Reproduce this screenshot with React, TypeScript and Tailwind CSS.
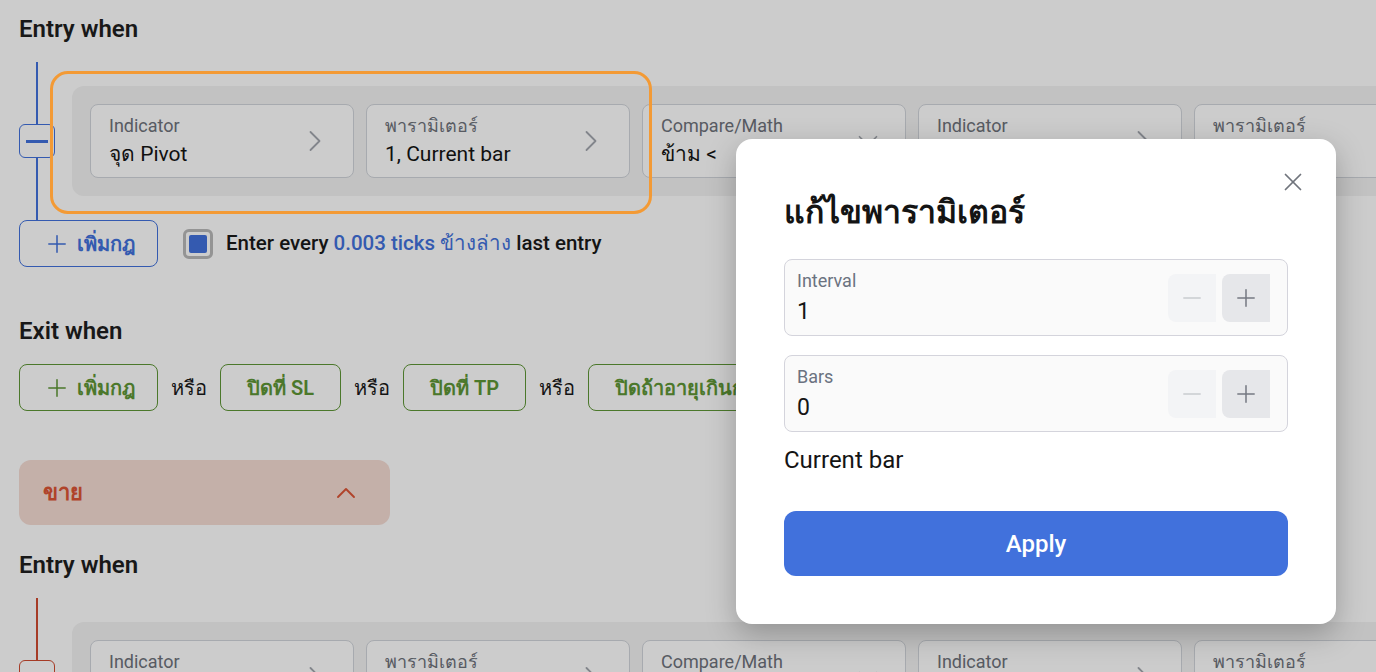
import { ChevronDown, ChevronRight, ChevronUp, Minus, Plus, X } from "lucide-react";

const BLUE = "#4171dc";

function ParamCard({
  label,
  value,
  down,
}: {
  label: string;
  value?: string;
  down?: boolean;
}) {
  return (
    <div className="flex h-[74px] w-[264px] shrink-0 items-center justify-between rounded-lg border border-[#d1d5db] bg-white pl-[18px] pr-[20px]">
      <div className="flex flex-col">
        <span className="text-[18px] leading-[22px] text-[#6e727b]">{label}</span>
        <span className="mt-[4px] h-[26px] text-[21px] leading-[26px] text-[#141414]">
          {value}
        </span>
      </div>
      {down ? (
        <ChevronDown size={34} strokeWidth={1.2} className="text-[#a3a7ae]" />
      ) : (
        <ChevronRight size={36} strokeWidth={1.2} className="text-[#a3a7ae]" />
      )}
    </div>
  );
}

function RuleRow({
  color,
  values,
}: {
  color: string;
  values: (string | undefined)[];
}) {
  const labels = ["Indicator", "พารามิเตอร์", "Compare/Math", "Indicator", "พารามิเตอร์"];
  return (
    <div className="flex">
      <div className="flex w-[36px] shrink-0 flex-col items-center">
        <div className="w-[2px] flex-1" style={{ backgroundColor: color }} />
        <div
          className="flex h-[34px] w-[36px] items-center justify-center rounded-md border bg-white"
          style={{ borderColor: color }}
        >
          <div className="h-[3px] w-[22px]" style={{ backgroundColor: color }} />
        </div>
        <div className="w-[2px] flex-1" style={{ backgroundColor: color }} />
      </div>
      <div className="ml-[17px] flex-1 py-6">
        <div className="flex gap-3 rounded-l-xl bg-[#f3f3f3] p-[18px]">
          {labels.map((l, i) => (
            <ParamCard key={i} label={l} value={values[i]} down={i === 2} />
          ))}
        </div>
      </div>
    </div>
  );
}

function GreenButton({ children }: { children: React.ReactNode }) {
  return (
    <div className="flex h-[47px] shrink-0 items-center rounded-lg border border-[#5e9636] px-[26px] text-[20px] font-semibold text-[#5e9636]">
      {children}
    </div>
  );
}

function Stepper({ label, value }: { label: string; value: string }) {
  return (
    <div className="flex h-[77px] items-center justify-between rounded-lg border border-[#d4d4dc] bg-[#fafafa] pl-[12px] pr-[17px]">
      <div className="flex flex-col">
        <span className="text-[18px] leading-[22px] text-[#6b7280]">{label}</span>
        <span className="mt-[6px] text-[23px] leading-[28px] text-[#151515]">{value}</span>
      </div>
      <div className="flex gap-[6px]">
        <div className="flex h-[48px] w-[48px] items-center justify-center rounded-l-lg bg-[#f3f4f6]">
          <Minus size={28} strokeWidth={1.3} className="text-[#c9cbd0]" />
        </div>
        <div className="flex h-[48px] w-[48px] items-center justify-center rounded-l-lg bg-[#e6e7ea]">
          <Plus size={28} strokeWidth={1.3} className="text-[#767a83]" />
        </div>
      </div>
    </div>
  );
}

export default function App() {
  return (
    <div className="relative h-[672px] w-[1376px] overflow-hidden bg-white font-[Roboto,'Noto_Sans',sans-serif]">
      <div className="pl-[19px] pt-[14px]">
        <h2 className="h-[30px] text-[24px] font-semibold leading-[30px] text-[#1f1f1f]">
          Entry when
        </h2>
        <div className="mt-[18px]">
          <RuleRow color={BLUE} values={["จุด Pivot", "1, Current bar", "ข้าม <", "", ""]} />
        </div>
        <div className="flex items-center">
          <div
            className="flex h-[47px] w-[139px] shrink-0 items-center justify-center gap-[6px] rounded-lg border text-[20px] font-semibold"
            style={{ borderColor: BLUE, color: BLUE }}
          >
            <Plus size={28} strokeWidth={1.3} />
            เพิ่มกฎ
          </div>
          <div className="ml-[25px] h-[30px] w-[30px] rounded-[6px] border-[3px] border-[#b9b9b9] bg-white p-[3px]">
            <div className="h-full w-full rounded-[2px] bg-[#4171dc]" />
          </div>
          <span className="ml-[13px] text-[20.5px] font-medium text-[#1a1a1a]">
            Enter every <span className="text-[#4171dc]">0.003 ticks ข้างล่าง</span> last entry
          </span>
        </div>

        <h2 className="mt-[49px] h-[30px] text-[24px] font-semibold leading-[30px] text-[#1f1f1f]">
          Exit when
        </h2>
        <div className="mt-[18px] flex items-center gap-[13px] text-[20px] text-[#1a1a1a]">
          <div className="flex h-[47px] w-[139px] shrink-0 items-center justify-center gap-[6px] rounded-lg border border-[#5e9636] text-[20px] font-semibold text-[#5e9636]">
            <Plus size={28} strokeWidth={1.3} />
            เพิ่มกฎ
          </div>
          <span>หรือ</span>
          <GreenButton>ปิดที่ SL</GreenButton>
          <span>หรือ</span>
          <GreenButton>ปิดที่ TP</GreenButton>
          <span>หรือ</span>
          <GreenButton>ปิดถ้าอายุเกินกำหนด</GreenButton>
        </div>

        <div className="mt-[49px] flex h-[65px] w-[371px] items-center justify-between rounded-xl bg-[#f5dcd4] pl-[24px] pr-[28px]">
          <span className="text-[22px] font-semibold text-[#dc5435]">ขาย</span>
          <ChevronUp size={32} strokeWidth={1.4} className="text-[#dc5435]" />
        </div>

        <h2 className="mt-[25px] h-[30px] text-[24px] font-semibold leading-[30px] text-[#1f1f1f]">
          Entry when
        </h2>
        <div className="mt-[18px]">
          <RuleRow color="#d04a30" values={["", "", "", "", ""]} />
        </div>
      </div>

      {/* dim overlay */}
      <div className="absolute inset-0 z-10 bg-black/20" />

      {/* tour highlight */}
      <div className="absolute left-[50px] top-[71px] z-20 h-[143px] w-[602px] rounded-[18px] border-[3px] border-[#f39a35]" />

      {/* modal */}
      <div className="absolute left-[736px] top-[139px] z-30 w-[600px] rounded-2xl bg-white p-12 shadow-[0_10px_30px_rgba(0,0,0,0.25)]">
        <button type="button" className="absolute right-[28px] top-[28px] text-[#70747c]">
          <X size={30} strokeWidth={1.4} />
        </button>
        <h3 className="h-[50px] text-[32px] font-bold leading-[50px] text-[#141414]">
          แก้ไขพารามิเตอร์
        </h3>
        <div className="mt-[22px] flex flex-col gap-[19px]">
          <Stepper label="Interval" value="1" />
          <Stepper label="Bars" value="0" />
        </div>
        <div className="mt-[14px] h-[28px] text-[24px] leading-[28px] text-[#141414]">
          Current bar
        </div>
        <button
          type="button"
          className="mt-[37px] flex h-[65px] w-full items-center justify-center rounded-xl bg-[#4171dc] text-[24px] font-medium text-white"
        >
          Apply
        </button>
      </div>
    </div>
  );
}
